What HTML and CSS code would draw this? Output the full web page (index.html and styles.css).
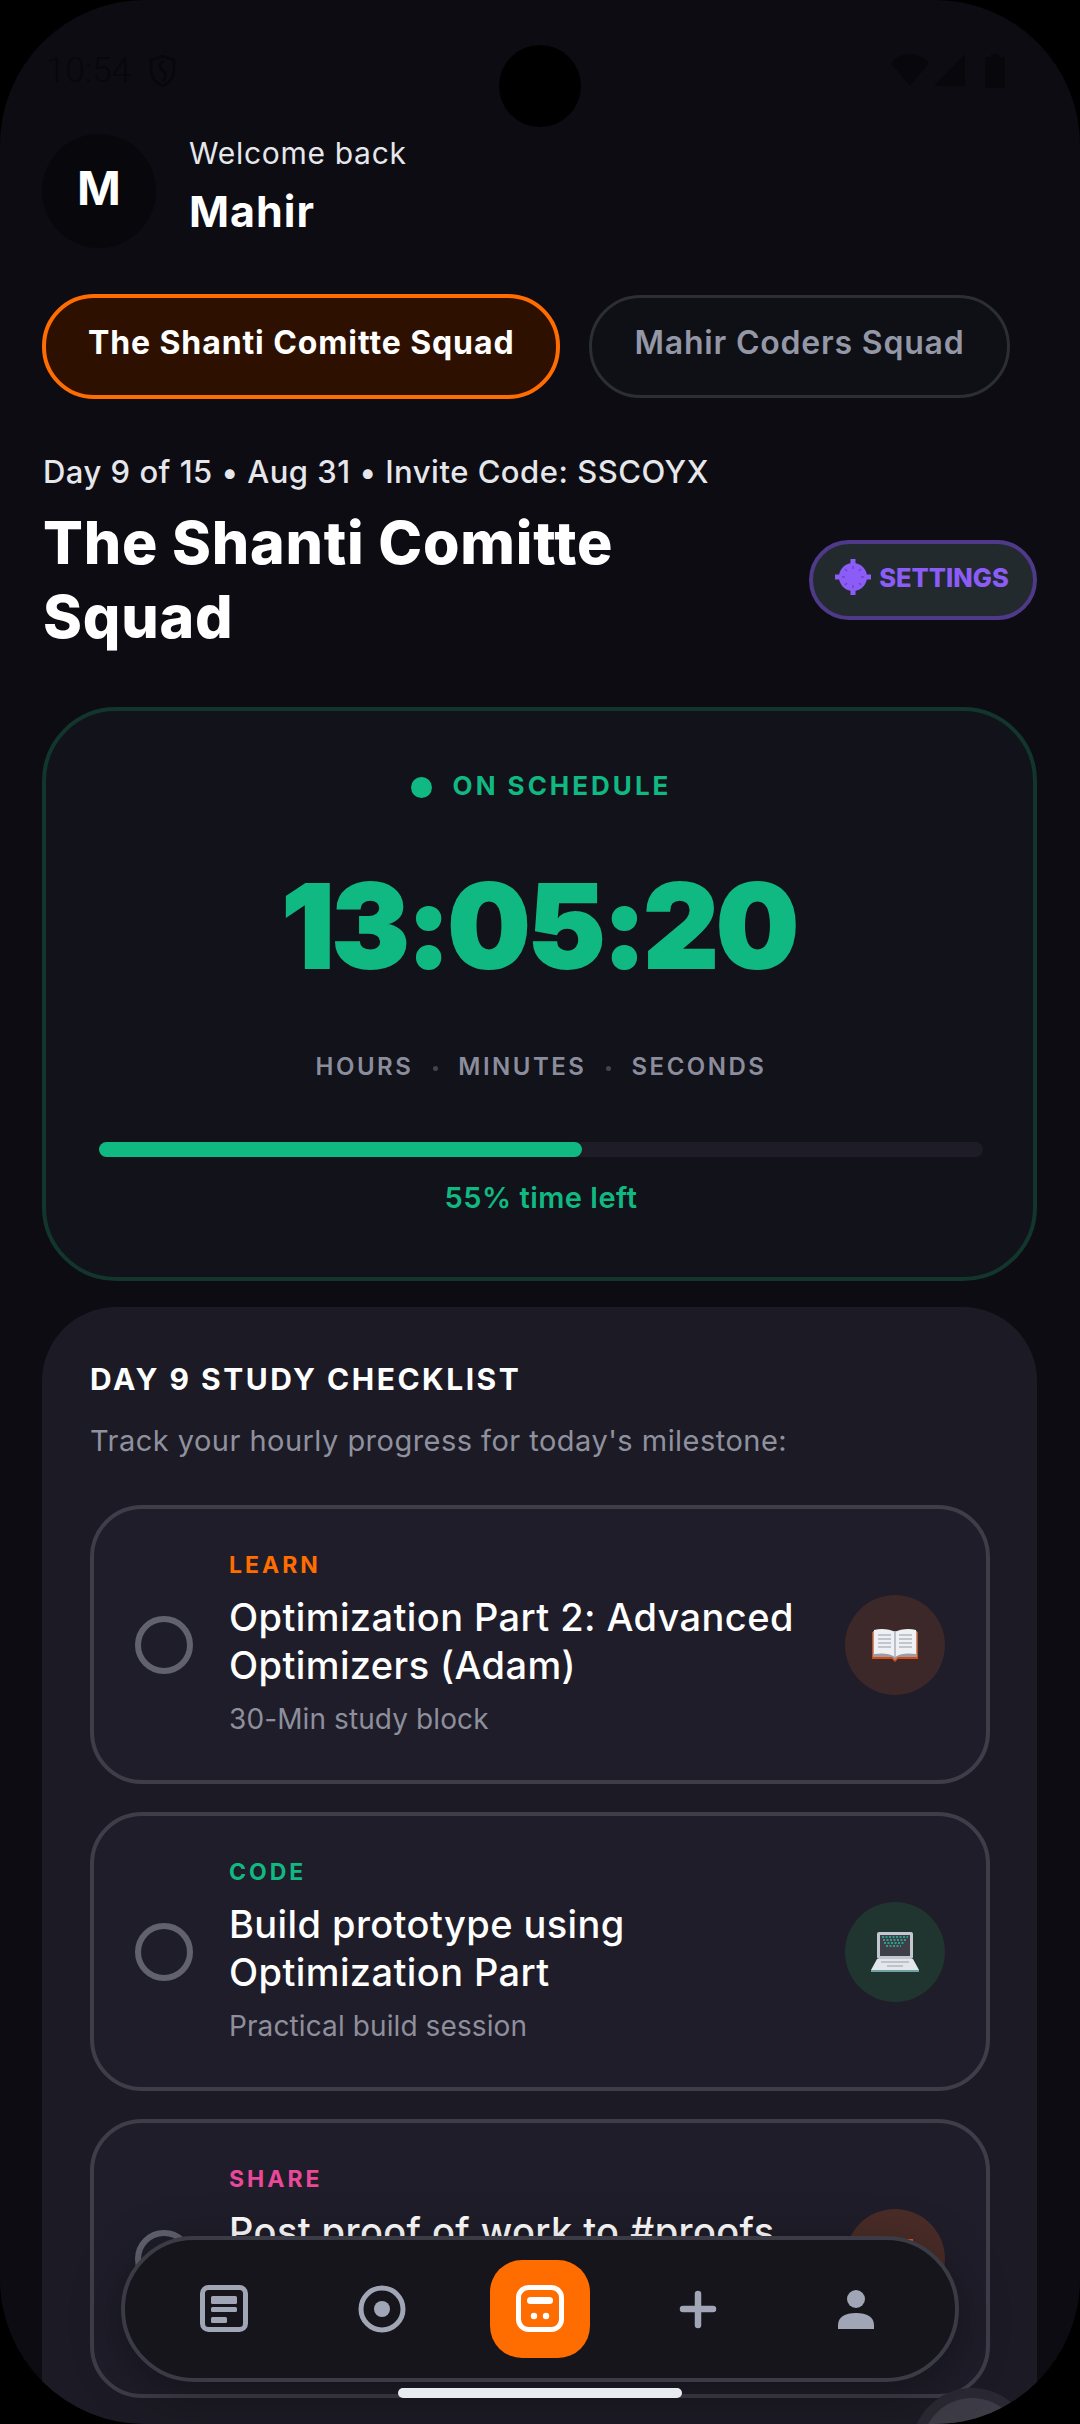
FILE: index.html
```html
<!DOCTYPE html>
<html lang="en">
<head>
    <meta charset="UTF-8">
    <meta name="viewport" content="width=device-width, initial-scale=1.0">
    <title>Squad Dashboard</title>
    <link rel="stylesheet" href="styles.css">
</head>
<body>
    <div class="screen">
        <div class="camera"></div>

        <div class="status-bar">
            <div class="status-left">
                <span class="clock">10:54</span>
                <svg class="shield" width="27" height="34" viewBox="0 0 27 34" fill="none" stroke="#08070b" stroke-width="2.5">
                    <path d="M13.5 2 L25 6 V16 C25 24 20 29 13.5 32 C7 29 2 24 2 16 V6 Z"/>
                    <path d="M15 7 C9 9 10 14 14 17 C18 20 18 24 13 27"/>
                </svg>
            </div>
            <div class="status-right">
                <svg width="38" height="32" viewBox="0 0 38 32" fill="#08070b"><path d="M19 32 L0 9 C10 -3 28 -3 38 9 Z"/></svg>
                <svg width="31" height="32" viewBox="0 0 31 32" fill="#08070b"><path d="M31 0 V32 H0 Z"/></svg>
                <svg class="battery" width="20" height="34" viewBox="0 0 20 34" fill="#08070b"><path d="M6 0 H14 V3 H18 A2 2 0 0 1 20 5 V32 A2 2 0 0 1 18 34 H2 A2 2 0 0 1 0 32 V5 A2 2 0 0 1 2 3 H6 Z"/></svg>
            </div>
        </div>

        <header class="profile">
            <div class="avatar">M</div>
            <div class="profile-text">
                <div class="welcome">Welcome back</div>
                <div class="username">Mahir</div>
            </div>
        </header>

        <div class="tabs">
            <div class="tab tab-active">The Shanti Comitte Squad</div>
            <div class="tab">Mahir Coders Squad</div>
        </div>

        <p class="meta">Day 9 of 15 • Aug 31 • Invite Code: SSCOYX</p>

        <div class="title-row">
            <h1>The Shanti Comitte<br>Squad</h1>
            <div class="settings-btn">
                <svg width="36" height="36" viewBox="0 0 36 36">
                    <circle cx="18" cy="18" r="14" fill="#8b5cf6"/>
                    <path d="M15.5 0 H20.5 V5 H15.5 Z M15.5 31 H20.5 V36 H15.5 Z M0 15.5 H5 V20.5 H0 Z M31 15.5 H36 V20.5 H31 Z" fill="#8b5cf6"/>
                    <path d="M18 7 V10 M18 26 V29 M7 18 H10 M26 18 H29 M10 10 L12 12 M26 10 L24 12 M10 26 L12 24 M26 26 L24 24" stroke="#6d45cc" stroke-width="1.5"/>
                </svg>
                <span>SETTINGS</span>
            </div>
        </div>

        <section class="timer-card">
            <div class="timer-status"><span class="status-dot"></span>ON SCHEDULE</div>
            <div class="timer">13:05:20</div>
            <div class="timer-labels">
                <span>HOURS</span><i></i><span>MINUTES</span><i></i><span>SECONDS</span>
            </div>
            <div class="progress"><div class="progress-fill" style="width: 54.6%"></div></div>
            <div class="progress-text">55% time left</div>
        </section>

        <section class="checklist">
            <h2>DAY 9 STUDY CHECKLIST</h2>
            <p class="checklist-sub">Track your hourly progress for today's milestone:</p>

            <div class="task">
                <div class="radio"></div>
                <div class="task-body">
                    <div class="task-tag tag-learn">LEARN</div>
                    <div class="task-title">Optimization Part 2: Advanced Optimizers (Adam)</div>
                    <div class="task-sub">30-Min study block</div>
                </div>
                <div class="task-icon icon-learn">
                    <svg width="48" height="34" viewBox="0 0 48 34">
                        <path d="M1 4 L1 31 L21 31 L24 34 L27 31 L47 31 L47 4 Z" fill="#d9480f"/>
                        <path d="M2 3 L2 29 L21 29 L24 32 L27 29 L46 29 L46 3 Z" fill="#9a9da6"/>
                        <path d="M3 2 C10 0 19 1 24 4 C29 1 38 0 45 2 L45 26 C38 25 29 25 24 29 C19 25 10 25 3 26 Z" fill="#eef0f4"/>
                        <path d="M7 7 H20 M7 11 H20 M7 15 H20 M7 19 H20 M28 7 H41 M28 11 H41 M28 15 H41 M28 19 H41" stroke="#b3b6c0" stroke-width="1.4"/>
                        <path d="M24 4 V29" stroke="#a9acb6" stroke-width="1.4"/>
                    </svg>
                </div>
            </div>

            <div class="task">
                <div class="radio"></div>
                <div class="task-body">
                    <div class="task-tag tag-code">CODE</div>
                    <div class="task-title">Build prototype using Optimization Part</div>
                    <div class="task-sub">Practical build session</div>
                </div>
                <div class="task-icon icon-code">
                    <svg width="48" height="40" viewBox="0 0 48 40">
                        <rect x="6" y="0" width="36" height="27" rx="2" fill="#c3c7cf"/>
                        <rect x="9" y="3" width="30" height="21" fill="#3f3f4a"/>
                        <path d="M11 5 H37 M12 8 H36 M13 11 H33 M15 14 H30" stroke="#2f9c87" stroke-width="2" stroke-dasharray="2 1.5"/>
                        <path d="M6 27 H42 L48 38 H0 Z" fill="#e3e6ea"/>
                        <rect x="0" y="38" width="48" height="2" fill="#6fa3a0"/>
                        <path d="M10 30 H38 M16 34 H32" stroke="#b3b7bf" stroke-width="1.6"/>
                    </svg>
                </div>
            </div>

            <div class="task">
                <div class="radio"></div>
                <div class="task-body">
                    <div class="task-tag tag-share">SHARE</div>
                    <div class="task-title">Post proof of work to #proofs</div>
                </div>
                <div class="task-icon icon-share">
                    <svg width="48" height="40" viewBox="0 0 48 40">
                        <rect x="34" y="0" width="8" height="14" fill="#e8501a"/>
                    </svg>
                </div>
            </div>
        </section>

        <div class="fab"><div class="fab-inner"></div></div>

        <nav class="bottom-nav">
            <div class="nav-item">
                <svg width="48" height="48" viewBox="0 0 48 48" fill="#a0a6b6">
                    <rect x="2.5" y="2.5" width="43" height="42" rx="6" fill="none" stroke="#a0a6b6" stroke-width="5"/>
                    <rect x="11" y="11" width="26" height="8" rx="1.5"/>
                    <rect x="11" y="22" width="26" height="5" rx="1.5"/>
                    <rect x="11" y="32" width="16" height="6" rx="1.5"/>
                </svg>
            </div>
            <div class="nav-item">
                <svg width="48" height="48" viewBox="0 0 48 48" fill="#a0a6b6">
                    <circle cx="24" cy="24" r="21" fill="none" stroke="#a0a6b6" stroke-width="5"/>
                    <circle cx="24" cy="24" r="8"/>
                </svg>
            </div>
            <div class="nav-item nav-active">
                <svg width="48" height="48" viewBox="0 0 48 48" fill="#fff">
                    <rect x="2.5" y="2.5" width="43" height="42" rx="10" fill="none" stroke="#fff" stroke-width="5"/>
                    <rect x="11" y="12" width="26" height="7" rx="3.5"/>
                    <circle cx="18" cy="31" r="3.2"/>
                    <circle cx="30" cy="31" r="3.2"/>
                </svg>
            </div>
            <div class="nav-item">
                <svg width="48" height="48" viewBox="0 0 48 48" stroke="#a0a6b6" stroke-width="6.5" stroke-linecap="round">
                    <path d="M24 9 V40 M9 24 H39"/>
                </svg>
            </div>
            <div class="nav-item">
                <svg width="48" height="48" viewBox="0 0 48 48" fill="#a0a6b6">
                    <circle cx="24" cy="14" r="9"/>
                    <path d="M6 44 V40 C6 32 13 28 24 28 C35 28 42 32 42 40 V44 Z"/>
                </svg>
            </div>
        </nav>

        <div class="home-bar"></div>
    </div>
</body>
</html>
```

FILE: styles.css
```css
* {
    box-sizing: border-box;
}
body {
    margin: 0;
    background: #000;
    font-family: Inter, "Noto Sans", sans-serif;
    color: #fff;
}
.screen {
    position: relative;
    width: 1080px;
    height: 2424px;
    overflow: hidden;
    background: #0d0c13;
    border-radius: 145px;
}
.camera {
    position: absolute;
    top: 45px;
    left: 499px;
    width: 82px;
    height: 82px;
    border-radius: 50%;
    background: #000;
}

/* status bar */
.status-bar {
    height: 134px;
    padding: 54px 75px 0 46px;
    display: flex;
    justify-content: space-between;
    align-items: flex-start;
}
.status-left {
    display: flex;
    align-items: center;
    gap: 18px;
}
.clock {
    font-family: Roboto, sans-serif;
    font-size: 35px;
    line-height: 34px;
    font-weight: 300;
    color: #08070b;
}
.status-right {
    display: flex;
    gap: 5px;
}
.battery {
    margin-left: 15px;
}

/* profile */
.profile {
    display: flex;
    align-items: center;
    gap: 33px;
    padding: 0 42px;
}
.avatar {
    width: 114px;
    height: 114px;
    border-radius: 50%;
    background: #08080c;
    display: flex;
    align-items: center;
    justify-content: center;
    font-size: 47px;
    font-weight: 700;
    padding-bottom: 8px;
}
.profile-text {
    padding-bottom: 12px;
}
.welcome {
    font-size: 30px;
    line-height: 36px;
    letter-spacing: 0.7px;
    color: #e5e7eb;
}
.username {
    font-size: 43px;
    line-height: 50px;
    font-weight: 700;
    letter-spacing: 1px;
    margin-top: 15px;
}

/* squad tabs */
.tabs {
    display: flex;
    align-items: center;
    gap: 29px;
    padding: 0 42px;
    margin-top: 46px;
}
.tab {
    height: 103px;
    padding: 0 42px 8px;
    display: flex;
    align-items: center;
    border: 3px solid #2c2e35;
    border-radius: 52px;
    background: #0f1016;
    color: #9497a6;
    font-size: 32px;
    font-weight: 600;
    letter-spacing: 0.8px;
}
.tab-active {
    height: 105px;
    border: 4px solid #ff6d00;
    background: #2d1000;
    color: #fff;
    font-weight: 700;
    letter-spacing: 0.9px;
}

/* squad title */
.meta {
    margin: 51px 43px 0;
    font-size: 31px;
    line-height: 44px;
    font-weight: 500;
    letter-spacing: 0.5px;
    color: #e5e7eb;
}
.title-row {
    display: flex;
    justify-content: space-between;
    align-items: center;
    margin: 12px 43px 0;
}
h1 {
    margin: 0;
    font-size: 59px;
    line-height: 74px;
    font-weight: 800;
    letter-spacing: 0.8px;
}
.settings-btn {
    width: 228px;
    height: 80px;
    padding: 0 2px 6px 0;
    display: flex;
    align-items: center;
    justify-content: center;
    gap: 8px;
    border: 4px solid #4f3a8a;
    border-radius: 40px;
    background: #222a2e;
    color: #8b5cf6;
    font-size: 25.5px;
    font-weight: 800;
}

/* countdown card */
.timer-card {
    margin: 53px 43px 0 42px;
    height: 574px;
    padding: 54px 50px 0 53px;
    border: 4px solid #12352c;
    border-radius: 74px;
    background: #12121a;
    text-align: center;
}
.timer-status {
    display: flex;
    justify-content: center;
    align-items: center;
    gap: 21px;
    height: 40px;
    color: #10b981;
    font-size: 26px;
    font-weight: 700;
    letter-spacing: 3px;
}
.status-dot {
    width: 21px;
    height: 21px;
    margin-top: 4px;
    border-radius: 50%;
    background: #10b981;
}
.timer {
    margin-top: 56px;
    margin-right: 4px;
    height: 130px;
    font-size: 116px;
    line-height: 130px;
    font-weight: 900;
    letter-spacing: -2.4px;
    color: #10b981;
    -webkit-text-stroke: 2px #10b981;
}
.timer-labels {
    display: flex;
    justify-content: center;
    align-items: center;
    gap: 20px;
    height: 36px;
    margin-top: 57px;
    color: #8b8d9c;
    font-size: 24px;
    font-weight: 600;
    letter-spacing: 2.5px;
}
.timer-labels i {
    width: 5px;
    height: 5px;
    margin-top: 4px;
    border-radius: 50%;
    background: #44444f;
}
.progress {
    height: 15px;
    margin-top: 58px;
    border-radius: 8px;
    background: #1e1d27;
}
.progress-fill {
    height: 100%;
    border-radius: 8px;
    background: #10b981;
}
.progress-text {
    margin-top: 21px;
    font-size: 29px;
    line-height: 40px;
    font-weight: 600;
    letter-spacing: 0.5px;
    color: #10b981;
}

/* checklist */
.checklist {
    margin: 26px 43px 0 42px;
    height: 1200px;
    padding: 52px 47px 0 48px;
    border-radius: 74px;
    background: #1c1b25;
}
h2 {
    margin: 0;
    font-size: 30px;
    line-height: 40px;
    font-weight: 700;
    letter-spacing: 2.5px;
}
.checklist-sub {
    margin: 20px 0 42px;
    font-size: 29px;
    line-height: 44px;
    letter-spacing: 0.47px;
    color: #8f919f;
}
.task {
    height: 279px;
    margin-bottom: 28px;
    padding: 0 41px;
    display: flex;
    align-items: center;
    gap: 36px;
    border: 4px solid #3e3d48;
    border-radius: 52px;
    background: #1f1d29;
}
.radio {
    flex: none;
    width: 58px;
    height: 58px;
    border: 6px solid #62626e;
    border-radius: 50%;
}
.task-body {
    flex: 1;
    align-self: flex-start;
    padding-top: 40px;
}
.task-tag {
    font-size: 23px;
    line-height: 32px;
    font-weight: 700;
    letter-spacing: 3px;
}
.tag-learn {
    color: #ff6d00;
}
.tag-code {
    color: #10b981;
}
.tag-share {
    color: #ec4899;
}
.task-title {
    margin-top: 12px;
    font-size: 38px;
    line-height: 48px;
    font-weight: 500;
    letter-spacing: 0.4px;
}
.task-sub {
    margin-top: 11px;
    font-size: 28px;
    line-height: 38px;
    letter-spacing: 0.1px;
    color: #8e8f9c;
}
.task-icon {
    flex: none;
    width: 100px;
    height: 100px;
    border-radius: 50%;
    display: flex;
    align-items: center;
    justify-content: center;
}
.icon-learn {
    background: #3c2729;
}
.icon-code {
    background: #203430;
}
.icon-share {
    background: #4a2c27;
}

/* overlays at the bottom */
.fab {
    position: absolute;
    left: 912px;
    top: 2388px;
    width: 120px;
    height: 120px;
    padding: 10px;
    border-radius: 50%;
    background: #2a2933;
}
.fab-inner {
    width: 100px;
    height: 100px;
    border-radius: 50%;
    background: #3d3c46;
}
.bottom-nav {
    position: absolute;
    left: 121px;
    top: 2236px;
    width: 838px;
    height: 146px;
    display: grid;
    grid-template-columns: repeat(5, 158px);
    justify-content: center;
    justify-items: center;
    align-items: center;
    border: 4px solid #3a3b44;
    border-radius: 73px;
    background: #15151b;
    box-shadow: 0 12px 50px rgba(0, 0, 0, 0.35);
}
.nav-item {
    width: 48px;
    height: 48px;
    display: flex;
    align-items: center;
    justify-content: center;
}
.nav-active {
    width: 100px;
    height: 98px;
    border-radius: 32px;
    background: #ff6d00;
}
.home-bar {
    position: absolute;
    left: 398px;
    top: 2388px;
    width: 284px;
    height: 10px;
    border-radius: 5px;
    background: #e8ebef;
}
```
